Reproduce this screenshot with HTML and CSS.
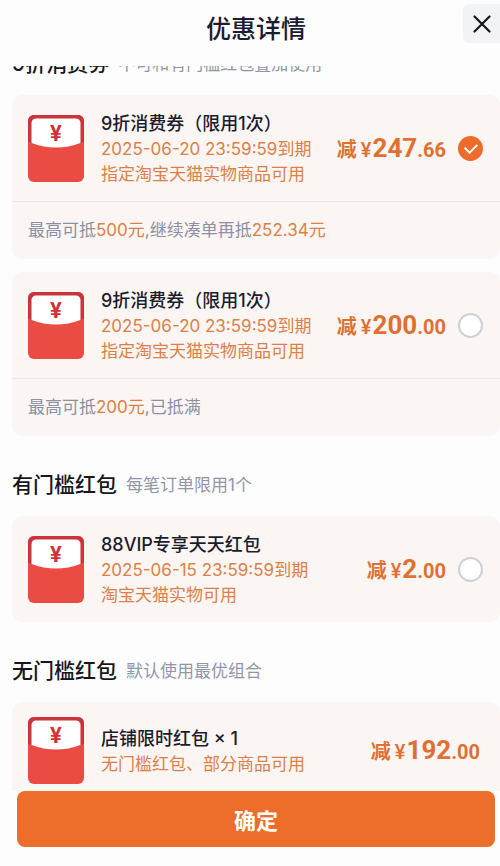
FILE: index.html
```html
<!DOCTYPE html>
<html lang="zh-CN">
<head>
<meta charset="utf-8">
<meta name="viewport" content="width=device-width, initial-scale=1">
<title>优惠详情</title>
<link rel="stylesheet" href="styles.css">
</head>
<body>
<svg class="defs" aria-hidden="true">
  <symbol id="packet" viewBox="0 0 56 67">
    <rect width="56" height="67" rx="6" fill="#ea4c43"/>
    <path d="M0 27V6a6 6 0 0 1 6-6h44a6 6 0 0 1 6 6v21l-3 2H3z" fill="#c9353a"/>
    <path d="M0 27l3 1q25 9 50 0l3-1v8H0z" fill="#ea4c43"/>
    <path d="M3.500 28V8a4.500 4.500 0 0 1 4.500-4.500h40a4.500 4.500 0 0 1 4.500 4.500v20q-24.500 9-49 0z" fill="#fff"/>
    <text class="packet-sign" x="28" y="26" text-anchor="middle">¥</text>
  </symbol>
</svg>
<header class="header">
  <h1 class="header-title">优惠详情</h1>
  <button class="close" type="button" aria-label="关闭">
    <svg width="18" height="18" viewBox="0 0 18 18" aria-hidden="true"><path d="M1.500 1.500l15 15M16.500 1.500l-15 15" stroke="#17181f" stroke-width="2.200" stroke-linecap="round"/></svg>
  </button>
</header>
<main class="list">
  <div class="list-content">
    <section>
      <div class="group-head"><h2 class="group-title">9折消费券</h2><p class="group-note">不可和有门槛红包叠加使用</p></div>
      <article class="card">
        <label class="row">
          <svg class="packet"><use href="#packet"/></svg>
          <span class="info">
            <span class="name">9折消费券（限用1次）</span>
            <span class="desc">2025-06-20 23:59:59到期</span>
            <span class="desc">指定淘宝天猫实物商品可用</span>
          </span>
          <span class="amount"><span class="minus">减</span><span class="yen">¥</span><span class="whole">247</span><span class="cents">.66</span></span>
          <input class="radio" type="radio" name="coupon" checked>
        </label>
        <p class="tip">最高可抵<em>500元</em>,继续凑单再抵<em>252.34元</em></p>
      </article>
      <article class="card">
        <label class="row">
          <svg class="packet"><use href="#packet"/></svg>
          <span class="info">
            <span class="name">9折消费券（限用1次）</span>
            <span class="desc">2025-06-20 23:59:59到期</span>
            <span class="desc">指定淘宝天猫实物商品可用</span>
          </span>
          <span class="amount"><span class="minus">减</span><span class="yen">¥</span><span class="whole">200</span><span class="cents">.00</span></span>
          <input class="radio" type="radio" name="coupon">
        </label>
        <p class="tip">最高可抵<em>200元</em>,已抵满</p>
      </article>
    </section>
    <section class="group">
      <div class="group-head"><h2 class="group-title">有门槛红包</h2><p class="group-note">每笔订单限用1个</p></div>
      <article class="card">
        <label class="row">
          <svg class="packet"><use href="#packet"/></svg>
          <span class="info">
            <span class="name">88VIP专享天天红包</span>
            <span class="desc">2025-06-15 23:59:59到期</span>
            <span class="desc">淘宝天猫实物可用</span>
          </span>
          <span class="amount"><span class="minus">减</span><span class="yen">¥</span><span class="whole">2</span><span class="cents">.00</span></span>
          <input class="radio" type="radio" name="packet">
        </label>
      </article>
    </section>
    <section class="group">
      <div class="group-head"><h2 class="group-title">无门槛红包</h2><p class="group-note">默认使用最优组合</p></div>
      <article class="card">
        <div class="row row-fixed">
          <svg class="packet"><use href="#packet"/></svg>
          <span class="info">
            <span class="name">店铺限时红包 × 1</span>
            <span class="desc">无门槛红包、部分商品可用</span>
          </span>
          <span class="amount"><span class="minus">减</span><span class="yen">¥</span><span class="whole">192</span><span class="cents">.00</span></span>
        </div>
      </article>
    </section>
  </div>
</main>
<footer class="footer">
  <button class="confirm" type="button">确定</button>
</footer>
</body>
</html>
```

FILE: styles.css
```css
* {
  box-sizing: border-box;
}

body {
  display: flex;
  flex-direction: column;
  height: 100vh;
  margin: 0;
  overflow: hidden;
  background: #fdfdfe;
  color: #1b1c2e;
  font-family: Inter, "Noto Sans CJK SC", sans-serif;
  font-size: 17px;
}

h1, h2, p {
  margin: 0;
}

.defs {
  position: absolute;
  width: 0;
  height: 0;
}

.header {
  display: grid;
  grid-template-columns: 1fr auto 1fr;
  align-items: start;
  flex: none;
  height: 66px;
  padding: 4px 0 0 12px;
}

.header-title {
  grid-column: 2;
  padding-top: 7px;
  font-size: 25px;
  font-weight: 500;
  line-height: 36px;
}

.close {
  display: flex;
  align-items: center;
  justify-content: center;
  justify-self: end;
  width: 37px;
  height: 39px;
  padding: 0;
  border: 0;
  border-radius: 6px 0 0 6px;
  background: #f2f3f7;
}

.list {
  flex: 1;
  min-height: 0;
  padding-left: 12px;
  overflow: hidden;
}

/* Scrolled slightly, so the first heading is cut by the header. */
.list-content {
  margin-top: -17px;
}

.group {
  padding-top: 34px;
}

.group-head {
  display: flex;
  align-items: center;
  gap: 9px;
  margin-bottom: 16px;
  line-height: 30px;
}

.group-title {
  color: #17171b;
  font-size: 21px;
  font-weight: 500;
}

.group-note {
  color: #9096a8;
}

.card {
  border-radius: 10px;
  background: #fbf5f3;
}

.card + .card {
  margin-top: 13px;
}

.row {
  display: flex;
  align-items: center;
  padding: 15px 17px 14px 16px;
}

.row-fixed {
  padding-right: 20px;
}

.packet {
  flex: none;
  width: 56px;
  height: 67px;
  margin-right: 17px;
}

.packet-sign {
  fill: #d2323a;
  font: 700 22px Roboto, sans-serif;
}

.info {
  display: flex;
  flex: 1;
  flex-direction: column;
  white-space: nowrap;
}

.name {
  font-size: 18px;
  font-weight: 500;
  line-height: 27px;
}

.desc {
  color: #dc8048;
  line-height: 25px;
}

.amount {
  display: flex;
  align-items: baseline;
  color: #e07032;
  font-family: Roboto, "Noto Sans CJK SC", sans-serif;
  font-weight: 700;
  line-height: 30px;
}

.minus {
  margin-right: 4px;
  font-size: 20px;
}

.yen {
  margin-right: 1px;
  font-size: 20px;
  font-weight: 500;
}

.whole {
  font-size: 26px;
}

.cents {
  font-size: 20px;
}

.radio {
  display: grid;
  place-items: center;
  flex: none;
  width: 25px;
  height: 25px;
  margin: 0 0 0 12px;
  border: 2px solid #cdd1d3;
  border-radius: 50%;
  background: #fff;
  appearance: none;
}

.radio:checked {
  border-color: #ee6c2b;
  background: #ee6c2b;
}

.radio:checked::after {
  width: 10px;
  height: 6px;
  margin-bottom: 3px;
  border: solid #fff;
  border-width: 0 0 2px 2px;
  transform: rotate(-45deg);
  content: "";
}

.tip {
  padding: 13px 16px;
  border-top: 1px solid #efe8e6;
  color: #8b90a3;
  line-height: 31px;
}

.tip em {
  color: #dc8048;
  font-style: normal;
}

.footer {
  flex: none;
  padding: 0 5px 19px 17px;
}

.confirm {
  display: block;
  width: 100%;
  height: 56px;
  padding: 0;
  border: 0;
  border-radius: 8px;
  background: #ed6d2b;
  color: #fff;
  font-family: inherit;
  font-size: 22px;
  font-weight: 700;
}
```
